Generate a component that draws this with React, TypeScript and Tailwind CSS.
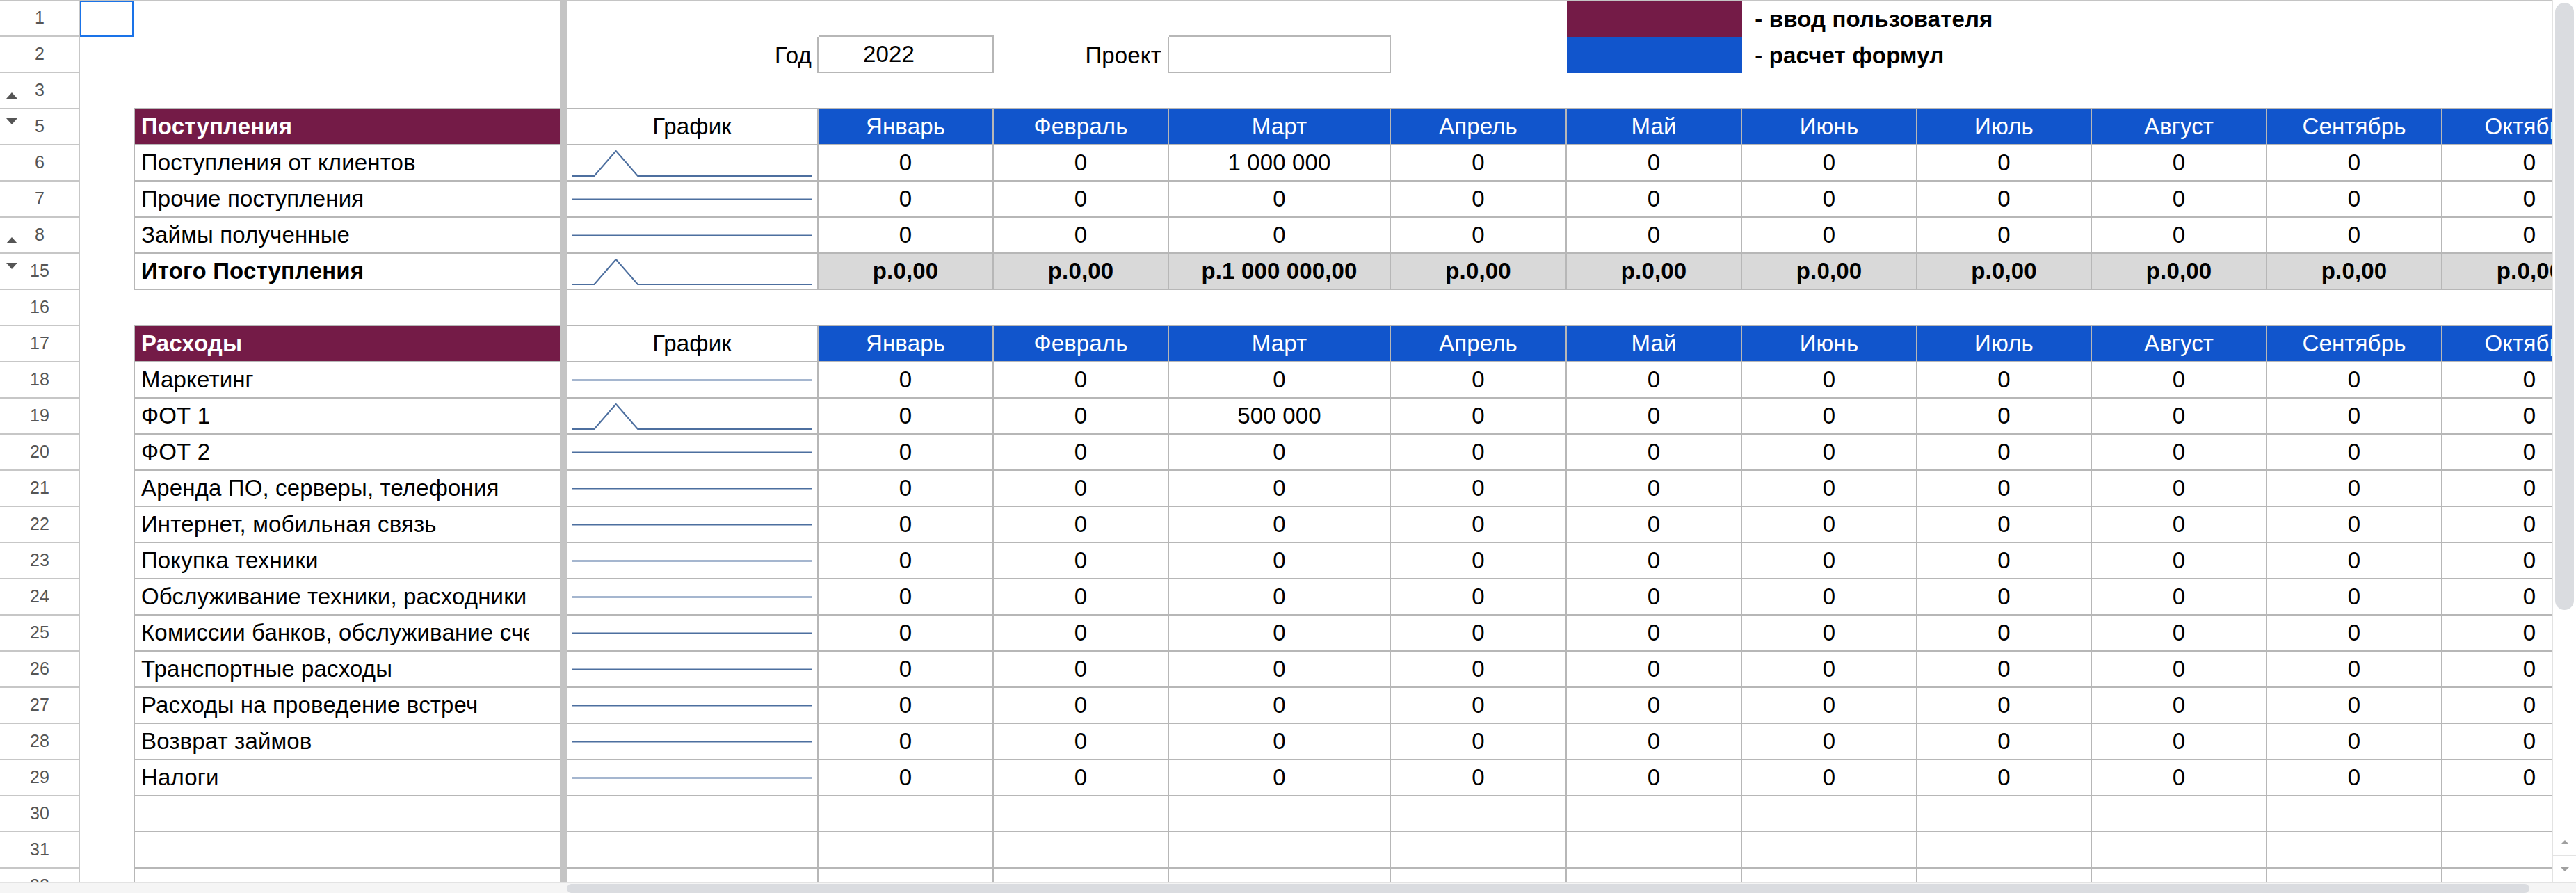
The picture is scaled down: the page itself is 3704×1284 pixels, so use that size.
import React from "react";

/**
 * Бюджет движения денег — вид таблицы (Google Sheets, масштаб ~250%).
 * Строки фиксированной высоты 52px, колонки заданы ширинами ниже.
 */

const MONTHS = [
  "Январь",
  "Февраль",
  "Март",
  "Апрель",
  "Май",
  "Июнь",
  "Июль",
  "Август",
  "Сентябрь",
  "Октябрь",
];

// widths of D..M, written out in full so Tailwind picks them up
const MONTH_W = [
  "w-[252px]",
  "w-[252px]",
  "w-[319px]",
  "w-[253px]",
  "w-[252px]",
  "w-[252px]",
  "w-[251px]",
  "w-[252px]",
  "w-[252px]",
  "w-[252px]",
];

const LINE = "border-[#b7b7b7]";

type RowKind = "legend1" | "legend2" | "pre" | "head" | "data" | "total" | "gap" | "empty";

type Row = {
  n: number;
  kind: RowKind;
  label?: string;
  march?: string;
  peak?: boolean;
  toggle?: "up" | "down";
};

const EXPENSES = [
  "Маркетинг",
  "ФОТ 1",
  "ФОТ 2",
  "Аренда ПО, серверы, телефония",
  "Интернет, мобильная связь",
  "Покупка техники",
  "Обслуживание техники, расходники",
  "Комиссии банков, обслуживание счетов",
  "Транспортные расходы",
  "Расходы на проведение встреч",
  "Возврат займов",
  "Налоги",
];

const ROWS: Row[] = [
  { n: 1, kind: "legend1" },
  { n: 2, kind: "legend2" },
  { n: 3, kind: "pre", toggle: "up" },
  { n: 5, kind: "head", label: "Поступления", toggle: "down" },
  { n: 6, kind: "data", label: "Поступления от клиентов", march: "1 000 000", peak: true },
  { n: 7, kind: "data", label: "Прочие поступления" },
  { n: 8, kind: "data", label: "Займы полученные", toggle: "up" },
  { n: 15, kind: "total", label: "Итого Поступления", march: "р.1 000 000,00", peak: true, toggle: "down" },
  { n: 16, kind: "gap" },
  { n: 17, kind: "head", label: "Расходы" },
  ...EXPENSES.map((label, i) => ({
    n: 18 + i,
    kind: "data" as RowKind,
    label,
    march: label === "ФОТ 1" ? "500 000" : undefined,
    peak: label === "ФОТ 1",
  })),
  { n: 30, kind: "empty" },
  { n: 31, kind: "empty" },
  { n: 32, kind: "empty" },
];

function Caret({ up }: { up: boolean }) {
  return (
    <svg width="16" height="9" viewBox="0 0 16 9" className="block">
      <path d={up ? "M8 0 L16 9 L0 9 Z" : "M0 0 L16 0 L8 9 Z"} fill="#555" />
    </svg>
  );
}

function Spark({ peak }: { peak?: boolean }) {
  const pts = Array.from({ length: 12 }, (_, i) => {
    const x = 8 + (i * 345) / 11;
    const y = peak ? (i === 2 ? 8 : 44) : 25.5;
    return `${x.toFixed(1)},${y}`;
  }).join(" ");
  return (
    <svg width="362" height="50" viewBox="0 0 362 50" className="block shrink-0">
      <polyline points={pts} fill="none" stroke="#4d6f9f" strokeWidth="2" strokeLinejoin="round" />
    </svg>
  );
}

const CELL = "h-full shrink-0 flex items-end pb-[1px] whitespace-nowrap";

function SheetRow({ row }: { row: Row }) {
  const { kind } = row;
  const boxed = kind === "head" || kind === "data" || kind === "total" || kind === "empty";
  const lined = boxed || kind === "pre" || kind === "gap";

  const bLabel = (() => {
    if (!row.label) return null;
    if (kind === "head")
      return <span className="font-bold text-white">{row.label}</span>;
    if (kind === "total") return <span className="font-bold">{row.label}</span>;
    return <span>{row.label}</span>;
  })();

  const monthCell = (i: number) => {
    const w = MONTH_W[i];
    if (kind === "legend1") {
      if (i === 0 || i === 2) return <div key={i} className={`${CELL} ${w} border-b-2 ${LINE}`} />;
      if (i === 4) return <div key={i} className={`${CELL} ${w} bg-[#741b47]`} />;
      if (i === 5)
        return (
          <div key={i} className={`${CELL} ${w} pl-[9px] font-bold`}>
            {"\u00a0- ввод пользователя"}
          </div>
        );
      return <div key={i} className={`${CELL} ${w}`} />;
    }
    if (kind === "legend2") {
      if (i === 0)
        return (
          <div key={i} className={`${CELL} ${w} border-r-2 border-b-2 ${LINE} pl-[64px]`}>
            2022
          </div>
        );
      if (i === 1)
        return (
          <div key={i} className={`${CELL} ${w} border-r-2 ${LINE} justify-end pr-[9px]`}>
            Проект
          </div>
        );
      if (i === 2) return <div key={i} className={`${CELL} ${w} border-r-2 border-b-2 ${LINE}`} />;
      if (i === 4) return <div key={i} className={`${CELL} ${w} bg-[#1155cc]`} />;
      if (i === 5)
        return (
          <div key={i} className={`${CELL} ${w} pl-[9px] font-bold`}>
            {"\u00a0- расчет формул"}
          </div>
        );
      return <div key={i} className={`${CELL} ${w}`} />;
    }
    if (!boxed) return <div key={i} className={`${CELL} ${w} ${lined ? `border-b-2 ${LINE}` : ""}`} />;
    if (kind === "head")
      return (
        <div key={i} className={`${CELL} ${w} border-r-2 border-b-2 ${LINE} bg-[#1155cc] text-white justify-center`}>
          {MONTHS[i]}
        </div>
      );
    if (kind === "total")
      return (
        <div key={i} className={`${CELL} ${w} border-r-2 border-b-2 ${LINE} bg-[#d9d9d9] font-bold justify-center`}>
          {i === 2 && row.march ? row.march : "р.0,00"}
        </div>
      );
    if (kind === "data")
      return (
        <div key={i} className={`${CELL} ${w} border-r-2 border-b-2 ${LINE} justify-center`}>
          {i === 2 && row.march ? row.march : "0"}
        </div>
      );
    return <div key={i} className={`${CELL} ${w} border-r-2 border-b-2 ${LINE}`} />;
  };

  return (
    <div className="flex h-[52px] shrink-0">
      {/* row number */}
      <div className="relative w-[115px] h-full shrink-0 flex items-center justify-center border-r-2 border-b-2 border-[#c7c7c7] text-[25px] tracking-normal text-[#555]">
        {row.toggle === "up" && (
          <span className="absolute left-[9px] bottom-[13px]">
            <Caret up />
          </span>
        )}
        {row.toggle === "down" && (
          <span className="absolute left-[9px] top-[13px]">
            <Caret up={false} />
          </span>
        )}
        <span className="pl-[1px]">{row.n}</span>
      </div>

      {/* column A */}
      {row.n === 1 ? (
        <div className="w-[77px] h-full shrink-0 border-2 border-[#1a73e8]" />
      ) : (
        <div className="w-[77px] h-full shrink-0" />
      )}

      {/* column B */}
      <div
        className={`${CELL} w-[613px] pl-[9px] ${boxed ? `border-l-2 border-b-2 ${LINE}` : lined ? `border-b-2 ${LINE}` : ""} ${
          kind === "head" ? "bg-[#741b47]" : ""
        }`}
      >
        <div className="w-[557px] overflow-hidden">{bLabel}</div>
      </div>

      {/* frozen divider */}
      <div className="w-[10px] h-full shrink-0 bg-[#c4c4c4]" />

      {/* column C: Год / График / sparkline */}
      {kind === "legend2" ? (
        <div className={`${CELL} w-[362px] border-r-2 ${LINE} justify-end pr-[8px]`}>Год</div>
      ) : boxed ? (
        kind === "head" ? (
          <div className={`${CELL} w-[362px] border-r-2 border-b-2 ${LINE} justify-center`}>График</div>
        ) : (
          <div className={`h-full shrink-0 w-[362px] border-r-2 border-b-2 ${LINE}`}>
            {kind !== "empty" && <Spark peak={row.peak} />}
          </div>
        )
      ) : (
        <div className={`${CELL} w-[362px] ${lined ? `border-b-2 ${LINE}` : ""}`} />
      )}

      {MONTHS.map((_, i) => monthCell(i))}
    </div>
  );
}

function VScroll() {
  return (
    <div className="w-[34px] shrink-0 flex flex-col border-l border-[#e3e3e3] bg-white">
      <div className="mt-[4px] mx-[3px] h-[873px] rounded-full bg-[#dadce0]" />
      <div className="flex-1" />
      <div className="h-[40px] border-t border-[#e3e3e3] flex items-center justify-center">
        <svg width="12" height="6" viewBox="0 0 12 6">
          <path d="M6 0 L12 6 L0 6 Z" fill="#a0a0a0" />
        </svg>
      </div>
      <div className="h-[38px] border-t border-[#e3e3e3] flex items-center justify-center">
        <svg width="12" height="6" viewBox="0 0 12 6">
          <path d="M0 0 L12 0 L6 6 Z" fill="#a0a0a0" />
        </svg>
      </div>
    </div>
  );
}

function HScroll() {
  return (
    <div className="h-[16px] shrink-0 flex bg-[#f5f5f5] border-t border-[#e3e3e3]">
      <div className="w-[815px] shrink-0" />
      <div className="w-[2822px] shrink-0 mt-[2px] rounded-full bg-[#dadce0]" />
      <div className="flex-1" />
    </div>
  );
}

export default function App() {
  return (
    <div className="w-[3704px] h-[1284px] flex flex-col overflow-hidden bg-white text-black text-[33px] tracking-[0.15px] font-['Liberation_Sans',Arial,sans-serif]">
      <div className="flex flex-1 min-h-0">
        <div className="flex-1 min-w-0 overflow-hidden flex flex-col border-t border-[#c4c4c4]">
          {ROWS.map((r) => (
            <SheetRow key={r.n} row={r} />
          ))}
        </div>
        <VScroll />
      </div>
      <HScroll />
    </div>
  );
}
